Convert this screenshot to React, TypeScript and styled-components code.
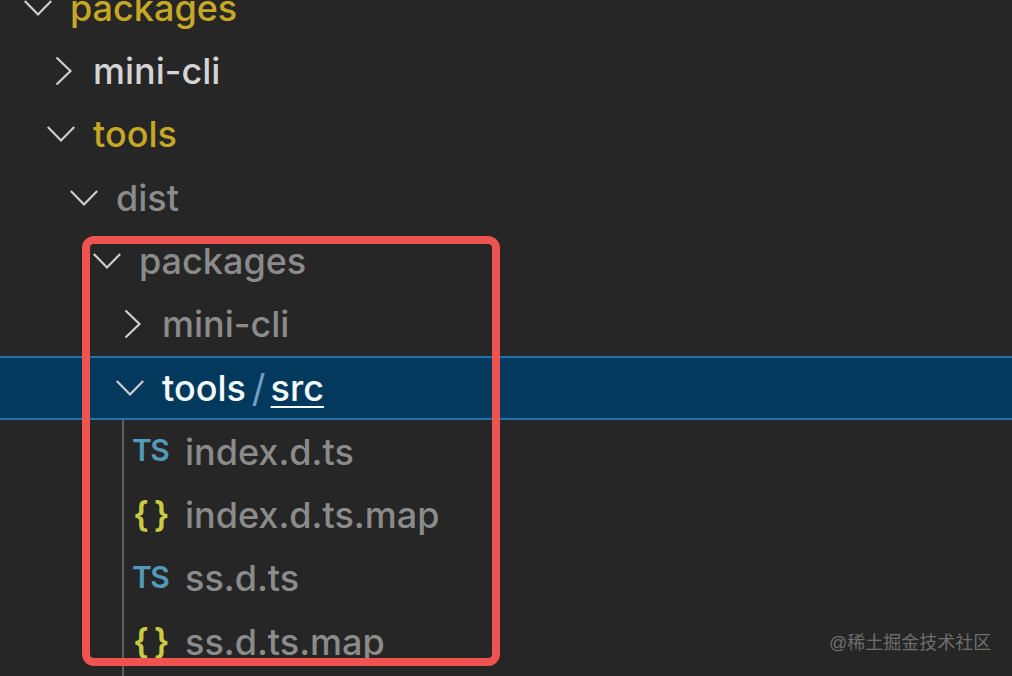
import React from "react";
import styled, { createGlobalStyle } from "styled-components";

const Global = createGlobalStyle`
  html, body { margin: 0; padding: 0; width: 100%; height: 100%; overflow: hidden; background: #262626; }
  #root { width: 100%; height: 100%; }
`;

const Page = styled.div`
  position: relative;
  width: 1012px;
  height: 676px;
  overflow: hidden;
  background: #262626;
  font-family: Inter, "Liberation Sans", sans-serif;
`;

const Tree = styled.div`
  display: flex;
  flex-direction: column;
  margin-top: -24px;
`;

const Row = styled.div<{ $depth: number; $selected?: boolean }>`
  display: flex;
  align-items: center;
  box-sizing: border-box;
  flex: none;
  height: ${(p) => (p.$selected ? 64 : 63.33)}px;
  padding-left: ${(p) => 24 + p.$depth * 23}px;
  background: ${(p) => (p.$selected ? "#04395e" : "transparent")};
  border-top: 2px solid ${(p) => (p.$selected ? "#2472ad" : "transparent")};
  border-bottom: 2px solid ${(p) => (p.$selected ? "#2472ad" : "transparent")};
`;

const Twistie = styled.svg`
  flex: none;
  width: 28px;
  height: 28px;
  margin-right: 18px;
  fill: none;
  stroke: #cfcfcf;
  stroke-width: 2.2;
`;

const Label = styled.span<{ $tone: "git" | "plain" | "muted" | "active" }>`
  font-size: 36px;
  font-weight: 500;
  line-height: 46px;
  margin-top: 0;
  color: ${(p) =>
    ({ git: "#c6a825", plain: "#d4d4d4", muted: "#8b8b8b", active: "#f4fbff" })[p.$tone]};
`;

const Slash = styled.span`
  font-size: 38px;
  line-height: 46px;
  color: #6f9fc8;
  margin: 0 5px 0 6px;
`;

const Underlined = styled.span`
  font-size: 36px;
  font-weight: 500;
  line-height: 46px;
  color: #f4fbff;
  text-decoration: underline;
  text-decoration-thickness: 2px;
  text-underline-offset: 5px;
`;

const FileGroup = styled.div`
  position: relative;
  padding-bottom: 30px;
  &::before {
    content: "";
    position: absolute;
    left: 122px;
    top: 0;
    bottom: 0;
    width: 2px;
    background: #5e5e5e;
  }
`;

const FileIcon = styled.span<{ $kind: "ts" | "json" }>`
  flex: none;
  box-sizing: border-box;
  width: 53px;
  margin-left: -7px;
  padding-left: ${(p) => (p.$kind === "ts" ? 0 : 1)}px;
  font-weight: 600;
  font-size: ${(p) => (p.$kind === "ts" ? 30 : 35)}px;
  letter-spacing: ${(p) => (p.$kind === "ts" ? -1.5 : 0)}px;
  word-spacing: ${(p) => (p.$kind === "ts" ? 0 : -4)}px;
  line-height: 40px;
  margin-top: ${(p) => (p.$kind === "ts" ? -3 : -1)}px;
  color: ${(p) => (p.$kind === "ts" ? "#519aba" : "#cbcb41")};
`;

const Highlight = styled.div`
  position: absolute;
  left: 82px;
  top: 236px;
  box-sizing: border-box;
  width: 418px;
  height: 430px;
  border: 8px solid #ef5350;
  border-radius: 12px;
  pointer-events: none;
`;

const Watermark = styled.div`
  position: absolute;
  left: 829px;
  top: 631px;
  font-family: "Liberation Sans", "Noto Sans CJK SC", sans-serif;
  font-size: 18px;
  line-height: 24px;
  color: #6e6e6e;
  white-space: nowrap;
`;

const Down = () => (
  <Twistie viewBox="0 0 28 28">
    <path d="M0.8 7 L14 20.5 L27.2 7" />
  </Twistie>
);

const Right = () => (
  <Twistie viewBox="0 0 28 28">
    <path d="M9.5 0.5 L23.5 14 L9.5 27.5" />
  </Twistie>
);

type Tone = "git" | "plain" | "muted" | "active";
const folders: { name: string; depth: number; open: boolean; tone: Tone }[] = [
  { name: "packages", depth: 0, open: true, tone: "git" },
  { name: "mini-cli", depth: 1, open: false, tone: "plain" },
  { name: "tools", depth: 1, open: true, tone: "git" },
  { name: "dist", depth: 2, open: true, tone: "muted" },
  { name: "packages", depth: 3, open: true, tone: "muted" },
  { name: "mini-cli", depth: 4, open: false, tone: "muted" },
];

const files: { name: string; kind: "ts" | "json" }[] = [
  { name: "index.d.ts", kind: "ts" },
  { name: "index.d.ts.map", kind: "json" },
  { name: "ss.d.ts", kind: "ts" },
  { name: "ss.d.ts.map", kind: "json" },
];

export default function App() {
  return (
    <Page>
      <Global />
      <Tree>
        {folders.map((f, i) => (
          <Row key={i} $depth={f.depth}>
            {f.open ? <Down /> : <Right />}
            <Label $tone={f.tone}>{f.name}</Label>
          </Row>
        ))}
        <Row $depth={4} $selected>
          <Down />
          <Label $tone="active">tools</Label>
          <Slash>/</Slash>
          <Underlined>src</Underlined>
        </Row>
        <FileGroup>
          {files.map((f) => (
            <Row key={f.name} $depth={5}>
              <FileIcon $kind={f.kind}>{f.kind === "ts" ? "TS" : "{ }"}</FileIcon>
              <Label $tone="muted">{f.name}</Label>
            </Row>
          ))}
        </FileGroup>
      </Tree>
      <Highlight />
      <Watermark>@稀土掘金技术社区</Watermark>
    </Page>
  );
}
